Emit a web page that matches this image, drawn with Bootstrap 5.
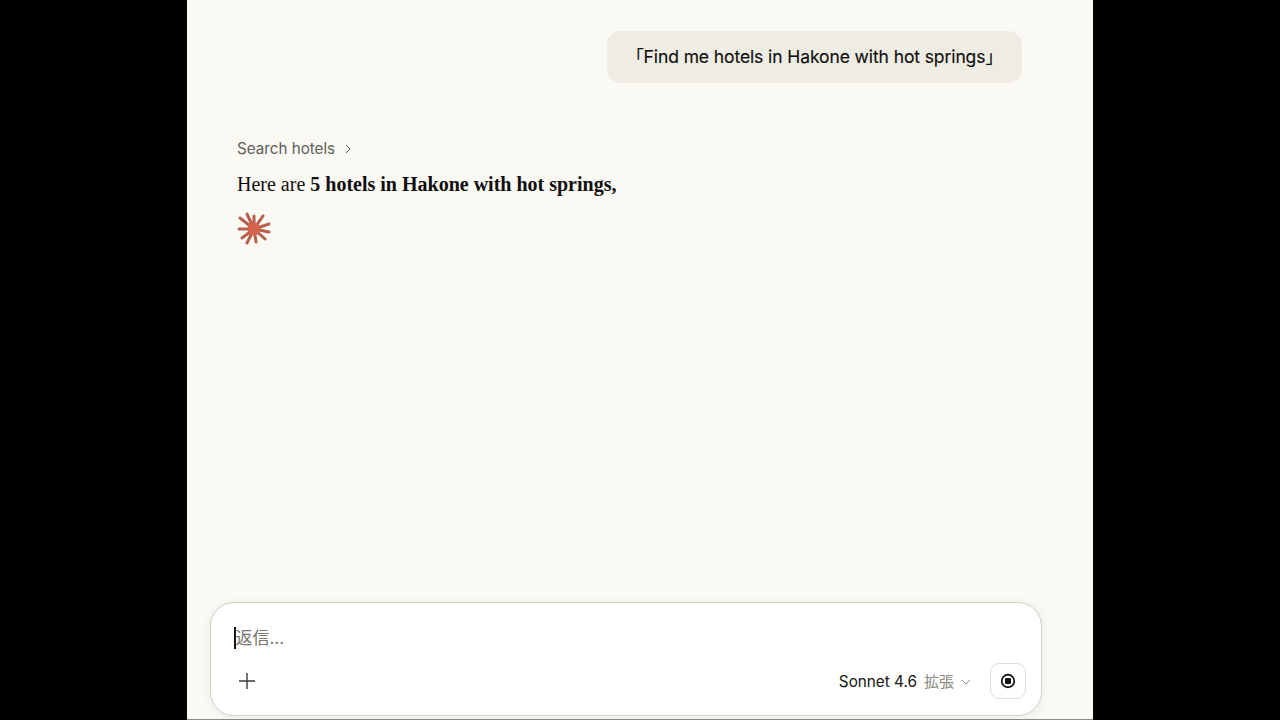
<!DOCTYPE html>
<html lang="en">
<head>
  <meta charset="UTF-8" />
  <title>Chat</title>
  <link href="https://cdn.jsdelivr.net/npm/bootstrap@5.3.0/dist/css/bootstrap.min.css" rel="stylesheet" />
  <style>
    html, body { height: 100%; }
    body { background: #000; overflow: hidden; font-family: Inter, "Noto Sans CJK JP", sans-serif; }
    .chat-pane { width: 906px; height: 719px; background: #faf9f4; border-bottom: 1px solid #8c8b87; box-sizing: content-box; }
    .chat-scroll { padding: 31px 71px 0 50px; }
    .user-bubble { background: #efece4; border-radius: 14px; height: 52px; width: 415px; font-size: 17.5px; color: #0f0f0e; letter-spacing: -0.1px; -webkit-text-stroke: 0.15px #0f0f0e; }
    .tool-line { margin-top: 55px; font-size: 15.2px; color: #5f5e5a; height: 22px; }
    .reply-line { font-family: "Liberation Serif", serif; font-size: 20px; color: #0f0f0e; margin-top: 11px; line-height: 26px; }
    .reply-line b { font-weight: 700; }
    .spark-icon { display: block; margin-top: 14px; margin-left: -1px; }
    .composer-wrap { padding: 0 51px 3px 23px; }
    .composer { height: 114px; background: #fff; border: 1px solid #d1cfc6; border-radius: 24px; padding: 24px 15px 16px 23px; box-shadow: 0 1px 10px rgba(0, 0, 0, .07); }
    .caret-bar { width: 1.5px; height: 22px; background: #141413; }
    .hint-text { font-size: 17px; color: #77766f; line-height: 22px; }
    .hint-dots { letter-spacing: 1px; }
    .plus-icon { margin-left: 4px; }
    .model-name { font-size: 15.3px; color: #141413; padding-top: 2px; }
    .model-mode { font-size: 15px; color: #8a8980; padding-top: 2px; margin-left: 7px; }
    .model-caret { margin-left: 7px; margin-top: 1px; }
    .stop-btn { width: 36px; height: 36px; border: 1px solid #dedcd4; border-radius: 9px; background: #fff; padding: 0; margin-left: 19px; }
  </style>
</head>
<body>

<div class="d-flex justify-content-center">
  <div class="chat-pane d-flex flex-column">
    <div class="chat-scroll flex-grow-1">
      <div class="d-flex justify-content-end">
        <div class="user-bubble d-flex align-items-center justify-content-center">「Find me hotels in Hakone with hot springs」</div>
      </div>
      <div class="tool-line d-flex align-items-center gap-2">
        <span>Search hotels</span>
        <svg width="10" height="10" viewBox="0 0 10 10" fill="none" stroke="#5f5e5a" stroke-width="1"><path d="M3 1l4 4-4 4"/></svg>
      </div>
      <p class="reply-line mb-0">Here are <b>5 hotels in Hakone with hot springs,</b></p>
      <svg class="spark-icon" width="36" height="36" viewBox="0 0 36 36" fill="none" stroke="#b8604e" stroke-width="3" stroke-linecap="round">
        <path d="M18 18L4 7M18 18L11 3M18 18L18 5M18 18L27 5M18 18L33 13M18 18L33 21M18 18L29 28M18 18L20 31M18 18L11 32M18 18L6 27M18 18L3 18"/>
        <circle cx="18" cy="18" r="6.5" fill="#d4634c" stroke="none"/>
      </svg>
    </div>
    <div class="composer-wrap">
      <div class="composer d-flex flex-column">
        <div class="d-flex align-items-center">
          <span class="caret-bar"></span>
          <span class="hint-text">返信<span class="hint-dots">…</span></span>
        </div>
        <div class="d-flex align-items-center justify-content-between mt-auto">
          <svg class="plus-icon" width="18" height="18" viewBox="0 0 18 18" stroke="#3d3d3a" stroke-width="1.4"><path d="M9 1v16M1 9h16"/></svg>
          <div class="d-flex align-items-center">
            <span class="model-name">Sonnet 4.6</span>
            <span class="model-mode">拡張</span>
            <svg class="model-caret" width="10" height="10" viewBox="0 0 10 10" fill="none" stroke="#8a8980"><path d="M1 3l4 4 4-4"/></svg>
            <button class="stop-btn btn d-flex align-items-center justify-content-center" type="button" aria-label="Stop">
              <svg width="16" height="16" viewBox="0 0 16 16"><circle cx="8" cy="8" r="6.3" fill="none" stroke="#141413" stroke-width="1.7"/><rect x="5" y="5" width="6" height="6" rx="1" fill="#141413"/></svg>
            </button>
          </div>
        </div>
      </div>
    </div>
  </div>
</div>

</body>
</html>
